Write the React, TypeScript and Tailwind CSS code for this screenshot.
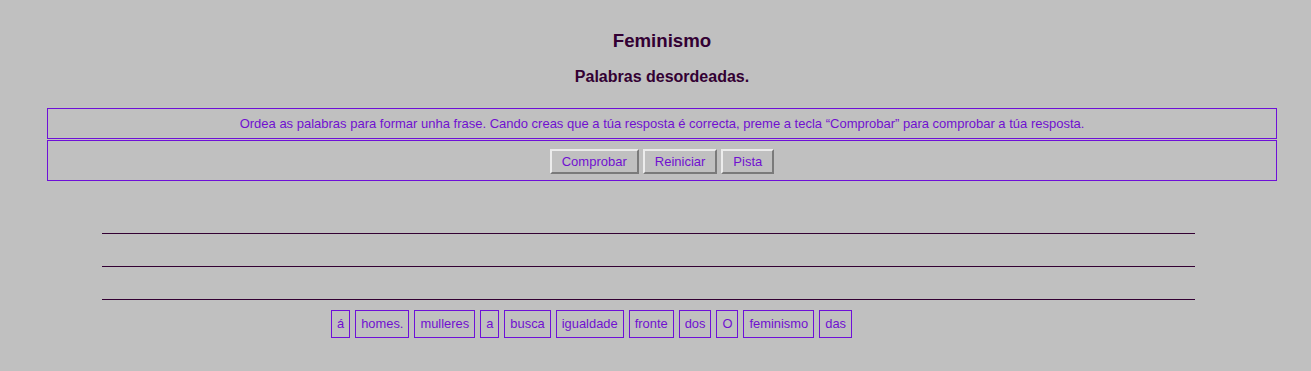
const words = ['á', 'homes.', 'mulleres', 'a', 'busca', 'igualdade', 'fronte', 'dos', 'O', 'feminismo', 'das'];

export default function App() {
  return (
    <div className="w-[1311px] h-[371px] bg-[#c0c0c0] font-['Liberation_Sans',Arial,sans-serif] overflow-hidden">
      <div className="ml-[47px] w-[1230px] pt-[30px]">
        <h1 className="text-center text-[18.67px] leading-[22px] font-bold text-[#330033]">Feminismo</h1>
        <h2 className="mt-[15px] text-center text-[16px] leading-[19px] font-bold text-[#330033]">
          Palabras desordeadas.
        </h2>
        <div className="mt-[22px] h-[31px] border border-[#6e10d8] flex items-center justify-center text-[13px] text-[#7010d0]">
          Ordea as palabras para formar unha frase. Cando creas que a túa resposta é correcta, preme a tecla “Comprobar” para comprobar a túa resposta.
        </div>
        <div className="mt-[1px] h-[41px] border border-[#6e10d8] flex justify-center gap-[4px] pt-[8px]">
          {['Comprobar', 'Reiniciar', 'Pista'].map((b) => (
            <button
              key={b}
              className="h-[25px] px-[10px] bg-[#c0c0c0] border-2 border-t-[#ececec] border-l-[#ececec] border-b-[#7a7a7a] border-r-[#7a7a7a] text-[13px] text-[#7010d0]"
            >
              {b}
            </button>
          ))}
        </div>
      </div>

      <div className="ml-[102px] w-[1093px] mt-[52px]">
        <div className="h-[1px] bg-[#330033]" />
        <div className="mt-[32px] h-[1px] bg-[#330033]" />
        <div className="mt-[32px] h-[1px] bg-[#330033]" />
      </div>

      <div className="ml-[331px] mt-[10px] flex gap-[5px]">
        {words.map((w, i) => (
          <span
            key={i}
            className="h-[28px] px-[5px] border border-[#6e10d8] flex items-center text-[12.9px] text-[#7010d0]"
          >
            {w}
          </span>
        ))}
      </div>
    </div>
  );
}
